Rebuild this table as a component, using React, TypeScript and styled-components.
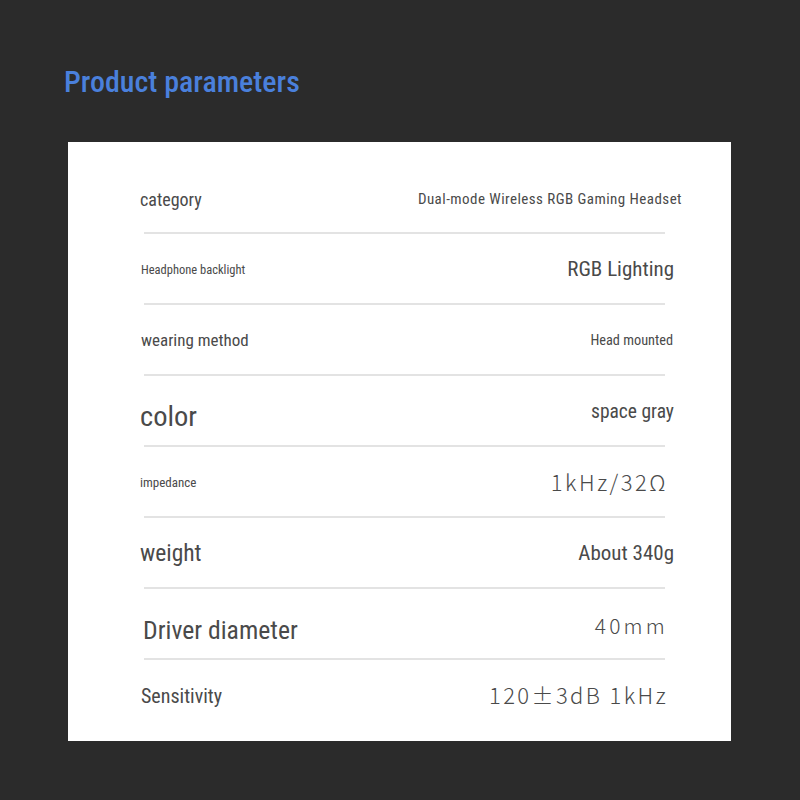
import styled, { createGlobalStyle } from 'styled-components';

const GlobalStyle = createGlobalStyle`
  html, body {
    margin: 0;
    padding: 0;
    background: #2b2b2b;
  }
`;

const condensed = "'Roboto Condensed', 'Roboto', sans-serif";

const Page = styled.div`
  width: 800px;
  height: 800px;
  background: #2b2b2b;
  padding-top: 62px;
  box-sizing: border-box;
`;

const Title = styled.h1`
  margin: 0 0 0 64px;
  height: 80px;
  font-family: ${condensed};
  font-weight: 500;
  font-size: 30px;
  line-height: 40px;
  color: #4a80dc;
`;

const Card = styled.div`
  margin-left: 68px;
  width: 663px;
  height: 599px;
  background: #fff;
  padding: 21px 0 0;
  box-sizing: border-box;
`;

const Row = styled.div<{ $last?: boolean }>`
  height: 71px;
  margin: 0 57px 0 72px;
  display: flex;
  align-items: center;
  justify-content: space-between;
  position: relative;
  &::after {
    content: '';
    display: ${(p) => (p.$last ? 'none' : 'block')};
    position: absolute;
    left: 4px;
    right: 9px;
    bottom: 0;
    height: 2px;
    background: #e3e3e3;
  }
`;

const Label = styled.span<{ $size: number; $dx?: number; $dy?: number }>`
  font-family: ${condensed};
  font-weight: 400;
  font-size: ${(p) => p.$size}px;
  line-height: 1.2;
  color: #4a4a4a;
  margin-left: ${(p) => p.$dx ?? 0}px;
  margin-top: ${(p) => (p.$dy ?? 0) * 2}px;
`;

const Value = styled.span<{ $size: number; $dx?: number; $dy?: number; $thin?: boolean; $spacing?: number }>`
  font-family: ${(p) => (p.$thin ? "'Noto Sans CJK SC', 'Noto Sans', sans-serif" : condensed)};
  font-weight: ${(p) => (p.$thin ? 300 : 400)};
  font-size: ${(p) => p.$size}px;
  line-height: 1.2;
  letter-spacing: ${(p) => p.$spacing ?? 0}px;
  color: #4a4a4a;
  margin-right: ${(p) => p.$dx ?? 0}px;
  margin-top: ${(p) => (p.$dy ?? 0) * 2}px;
`;

type Spec = {
  label: string;
  labelSize: number;
  labelDx?: number;
  labelDy?: number;
  value: string;
  valueSize: number;
  valueDx?: number;
  valueDy?: number;
  thin?: boolean;
  spacing?: number;
};

const specs: Spec[] = [
  { label: 'category', labelSize: 18, value: 'Dual-mode Wireless RGB Gaming Headset', valueSize: 15, valueDx: -8, spacing: 0.45, labelDy: 1 },
  { label: 'Headphone backlight', labelSize: 12.5, labelDx: 1, value: 'RGB Lighting', valueSize: 21 },
  { label: 'wearing method', labelSize: 17, labelDx: 1, value: 'Head mounted', valueSize: 14.3, valueDx: 1 },
  { label: 'color', labelSize: 28.5, labelDy: 6, value: 'space gray', valueSize: 19.5 },
  { label: 'impedance', labelSize: 13, value: '1kHz/32Ω', valueSize: 22, valueDx: 6, valueDy: -1, thin: true, spacing: 2.5 },
  { label: 'weight', labelSize: 23.5, value: 'About 340g', valueSize: 21 },
  { label: 'Driver diameter', labelSize: 25.7, labelDx: 3, labelDy: 6, value: '40mm', valueSize: 21, valueDx: 6, valueDy: 1, thin: true, spacing: 3.2 },
  { label: 'Sensitivity', labelSize: 20, labelDx: 1, value: '120±3dB 1kHz', valueSize: 22, valueDx: 6, valueDy: -1, thin: true, spacing: 2.4 },
];

export default function App() {
  return (
    <Page>
      <GlobalStyle />
      <Title>Product parameters</Title>
      <Card>
        {specs.map((s, i) => (
          <Row key={s.label} $last={i === specs.length - 1}>
            <Label $size={s.labelSize} $dx={s.labelDx} $dy={s.labelDy}>{s.label}</Label>
            <Value $size={s.valueSize} $dx={s.valueDx} $dy={s.valueDy} $thin={s.thin} $spacing={s.spacing}>
              {s.value}
            </Value>
          </Row>
        ))}
      </Card>
    </Page>
  );
}
